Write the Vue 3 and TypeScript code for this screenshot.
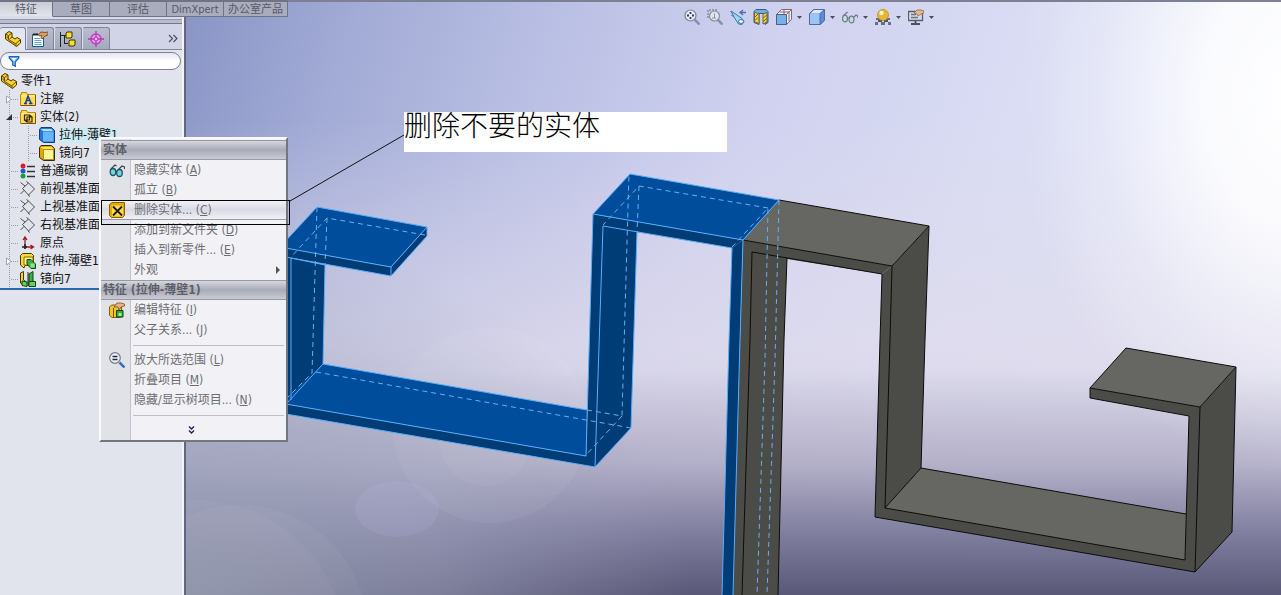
<script setup lang="ts">
import { ref } from 'vue'

interface TreeItem {
  label: string
  icon: string
  level: number
  arrow?: 'open' | 'closed'
  selected?: boolean
}

interface MenuItem {
  label: string
  key: string
  icon?: string
  hot?: boolean
  submenu?: boolean
}

interface Tool {
  icon: string
  title: string
  drop: boolean
}

const tabs = ['特征', '草图', '评估', 'DimXpert', '办公室产品']
const activeTab = ref('特征')
const filterText = ref('')

const panelTabs = [
  { icon: 'part', title: '设计树' },
  { icon: 'props', title: '属性' },
  { icon: 'config', title: '配置' },
  { icon: 'target', title: 'DimXpert 管理' },
]
const activePanel = ref('part')

const tree: TreeItem[] = [
  { label: '零件1', icon: 'part', level: 0 },
  { label: '注解', icon: 'note', level: 1, arrow: 'closed' },
  { label: '实体(2)', icon: 'bodies', level: 1, arrow: 'open' },
  { label: '拉伸-薄壁1', icon: 'cube-blue', level: 2, selected: true },
  { label: '镜向7', icon: 'cube-yellow', level: 2 },
  { label: '普通碳钢', icon: 'material', level: 1 },
  { label: '前视基准面', icon: 'plane', level: 1 },
  { label: '上视基准面', icon: 'plane', level: 1 },
  { label: '右视基准面', icon: 'plane', level: 1 },
  { label: '原点', icon: 'origin', level: 1 },
  { label: '拉伸-薄壁1', icon: 'extrude', level: 1, arrow: 'closed' },
  { label: '镜向7', icon: 'mirror', level: 1 },
]

const groups: { title?: string; items: MenuItem[] }[] = [
  {
    title: '实体',
    items: [
      { label: '隐藏实体', key: 'A', icon: 'glasses' },
      { label: '孤立', key: 'B' },
      { label: '删除实体...', key: 'C', icon: 'delete-body', hot: true },
      { label: '添加到新文件夹', key: 'D' },
      { label: '插入到新零件...', key: 'E' },
      { label: '外观', key: '', submenu: true },
    ],
  },
  {
    title: '特征 (拉伸-薄壁1)',
    items: [
      { label: '编辑特征', key: 'I', icon: 'edit-feature' },
      { label: '父子关系...', key: 'J' },
    ],
  },
  {
    items: [
      { label: '放大所选范围', key: 'L', icon: 'zoom-sel' },
      { label: '折叠项目', key: 'M' },
      { label: '隐藏/显示树项目...', key: 'N' },
    ],
  },
]

const tools: Tool[] = [
  { icon: 'zoom-fit', title: '整屏显示全图', drop: false },
  { icon: 'zoom-area', title: '局部放大', drop: false },
  { icon: 'prev-view', title: '上一视图', drop: false },
  { icon: 'section', title: '剖面视图', drop: false },
  { icon: 'orient', title: '视图定向', drop: true },
  { icon: 'shaded', title: '显示样式', drop: true },
  { icon: 'glasses-gray', title: '隐藏/显示项目', drop: true },
  { icon: 'scene', title: '应用布景', drop: true },
  { icon: 'view-set', title: '视图设定', drop: true },
]
</script>

<template>
  <div class="app">
    <svg class="defs" aria-hidden="true">
      <symbol id="part" viewBox="0 0 16 16">
        <path d="M.5 3l3.500-2.500 3 1.500v4l3 2 2-1.500 3.500 2v3.500l-4 3.500L.5 8z" fill="#f7d52c" stroke="#4a3500" stroke-linejoin="round" />
        <path d="M.5 3l3 1.500v4L11 13v2M3.500 4.500L7 2M11 12.500l4-3.500M7 6L4.500 8" fill="none" stroke="#6b4d00" />
        <path d="M1.500 4.500l1.500 1v2.500L1.500 7zM5 10l5 3.500v1L5 11z" fill="#a87b00" />
      </symbol>
      <symbol id="props" viewBox="0 0 16 16">
        <path d="M.5 3.500h11v12H.5z" fill="#fff" stroke="#1d5b8f" />
        <path d="M2.500 7.500h6M2.500 9.500h7M2.500 11.500h7M2.500 13.500h7" stroke="#58a5dc" />
        <path d="M1 3.500h5" stroke="#222" stroke-width="2" />
        <path d="M6 4l3-3 4 .5 3-.5v3l-3 1-3 3-1-2 1-2-2 1z" fill="#d9a066" stroke="#6d4012" stroke-width=".8" />
      </symbol>
      <symbol id="config" viewBox="0 0 16 16">
        <path d="M.5 1v15M1 4.500H6M4.500 5v8M5 12.500H8" stroke="#222" fill="none" />
        <path d="M6 2l1-1h5v5l-1 1H6zM9 10l1-1h5v5l-1 1H9z" fill="#f8df33" stroke="#3d3000" />
      </symbol>
      <symbol id="target" viewBox="0 0 16 16">
        <circle cx="8" cy="8" r="5" fill="#dba6e4" stroke="#c23fc8" stroke-width="1.500" />
        <path d="M8 0v16M0 8h16" stroke="#b636c0" stroke-width="1.300" />
        <circle cx="8" cy="8" r="2" fill="#e8c7f0" stroke="#b636c0" />
      </symbol>
      <symbol id="funnel" viewBox="0 0 16 16">
        <path d="M2.500 3h11v1.500L9.500 9v5l-3-1.500V9l-4-4.500z" fill="#7cc4f5" stroke="#1660b8" stroke-width="1.300" />
        <path d="M5 4.500h6L8 8z" fill="#fff" />
      </symbol>
      <symbol id="folder" viewBox="0 0 16 16">
        <path d="M.5 3.500h1v-2h5l1 2h8v11H.5z" fill="#ffdc55" stroke="#c08600" />
        <path d="M1.500 5h13" stroke="#fff3ad" />
        <path d="M15.500 4v10.500H1" fill="none" stroke="#7d5200" />
      </symbol>
      <symbol id="note" viewBox="0 0 16 16">
        <use href="#folder" />
        <path d="M4 12.500h3M9 12.500h3.500M5.500 12L8 5l3 7M6.500 9.500h3.500" fill="none" stroke="#143f9c" stroke-width="1.500" />
      </symbol>
      <symbol id="bodies" viewBox="0 0 16 16">
        <use href="#folder" />
        <path d="M4.500 6h5v5h-5zM7 8h5v5H7zM4.500 11L7 13M9.500 6L12 8" fill="none" stroke="#372400" stroke-width="1.200" />
      </symbol>
      <symbol id="cube-blue" viewBox="0 0 16 16">
        <path d="M.5 2.500L2 .5h10.500l3 3v12h-11l-4-3z" fill="#2277d8" stroke="#123f83" />
        <path d="M4 4.500h10.500v10H4z" fill="#66b5ff" />
        <path d="M1.500 2h11l1.500 2H4z" fill="#b5dbff" />
      </symbol>
      <symbol id="cube-yellow" viewBox="0 0 16 16">
        <path d="M.5 2.500L2 .5h10.500l3 3v12h-11l-4-3z" fill="#e0aa00" stroke="#3b2a00" />
        <path d="M4.500 4.500h10v10h-10z" fill="#fff59a" stroke="#8b6500" stroke-width=".6" />
        <path d="M1.500 2h11l1.500 2H4z" fill="#ffe55a" />
      </symbol>
      <symbol id="material" viewBox="0 0 16 16">
        <circle cx="3" cy="3" r="2.500" fill="#d91e2a" />
        <circle cx="3" cy="8" r="2.500" fill="#2258cf" />
        <circle cx="3" cy="13" r="2.500" fill="#1d9b42" />
        <path d="M7 3.500h8M7 8.500h8M7 13.500h8" stroke="#333" stroke-width="1.500" />
      </symbol>
      <symbol id="plane" viewBox="0 0 16 16">
        <path d="M2.500 7.500l6-5.500 6 6-6 6zM.5 1.500L5 5M.5 13L4 9.500M8.500 2L6.500 .5M8 14l2 1.500" fill="none" stroke="#4b4b4b" />
      </symbol>
      <symbol id="origin" viewBox="0 0 16 16">
        <path d="M5 14V2M3 5l2-3 2 3M4 12h9M10.500 10l3 2-3 2" fill="none" stroke="#a31621" stroke-width="1.300" />
        <path d="M2 12h5M5 9v5" stroke="#222" stroke-width="1.500" />
      </symbol>
      <symbol id="extrude" viewBox="0 0 16 16">
        <path d="M.5 2.500l2-2h9l2 2v10H5L4 15l-3.500-3z" fill="#f6da38" stroke="#4b3900" />
        <path d="M4 4h9v8H4z" fill="#fff18a" stroke="#8a6a00" />
        <path d="M7 6.500h4l4.500 4.500v4.500H11L7 11z" fill="#3caf45" stroke="#0d4b13" />
        <path d="M10.500 10.500h4v4h-4z" fill="#8be68b" />
      </symbol>
      <symbol id="mirror" viewBox="0 0 16 16">
        <path d="M.5 2l3-1.500V9l3 2v4l-6-3z" fill="#f2d232" stroke="#463600" />
        <path d="M9 3l4-2.500V10l2 1v4H9z" fill="#3eae44" stroke="#0b4712" />
        <path d="M2 10l5 1v4.500l-5-1zM9 10.500h6.500v5H9z" fill="#64d35e" stroke="#0b4712" />
        <path d="M8 1v14" stroke="#222" />
      </symbol>
      <symbol id="glasses" viewBox="0 0 16 16">
        <ellipse cx="4" cy="10" rx="2.800" ry="3.500" fill="#75d3e2" stroke="#1c5663" stroke-width="1.300" />
        <ellipse cx="10.500" cy="11" rx="2.800" ry="3.500" fill="#75d3e2" stroke="#1c5663" stroke-width="1.300" />
        <path d="M6.500 9.500l1.500 0M2 7l4-4 1.500 1M9.500 7.500L13 4l2.500 1v2" fill="none" stroke="#33474d" stroke-width="1.200" />
      </symbol>
      <symbol id="glasses-gray" viewBox="0 0 16 16">
        <ellipse cx="3" cy="9.500" rx="2.500" ry="3.300" fill="#c9dce6" stroke="#727a8a" stroke-width="1.200" />
        <ellipse cx="9.500" cy="10.500" rx="2.500" ry="3.300" fill="#c9dce6" stroke="#727a8a" stroke-width="1.200" />
        <path d="M5.500 9H7M1 7l4.500-4M11.500 8.500L14 6l1.500.5v2" fill="none" stroke="#727a8a" stroke-width="1.200" />
      </symbol>
      <symbol id="delete-body" viewBox="0 0 16 16">
        <path d="M.5 2.500L3 .5h12.500v13l-2 2H2.500l-2-2z" fill="#e3a900" stroke="#8b6200" />
        <path d="M3 3.500h11v11H3z" fill="#ffd94a" />
        <path d="M4 4.500l9 9M13 4.500l-9 9" stroke="#1b1b1b" stroke-width="1.800" />
      </symbol>
      <symbol id="edit-feature" viewBox="0 0 16 16">
        <path d="M.5 5l2-2h8l2 2v9l-1 1.500H3l-2.500-2z" fill="#f2c52e" stroke="#8a5c00" />
        <path d="M4.500 6v9" stroke="#7c5300" />
        <path d="M7.500 8.500h6.500v6.500H7.500z" fill="#34a93c" stroke="#0b4b12" />
        <path d="M9.500 11h3v3h-3z" fill="#a5ef98" />
        <path d="M5 5l3-4h4l3.500 1v2L12 5l-2 3-1-3z" fill="#e5b48a" stroke="#814a1a" stroke-width=".8" />
      </symbol>
      <symbol id="zoom-sel" viewBox="0 0 16 16">
        <circle cx="6" cy="6" r="5.300" fill="#eef2f8" stroke="#777c88" stroke-width="1.200" />
        <path d="M3.500 4.500h5M3.500 7.500h5" stroke="#222b44" stroke-width="1.600" />
        <path d="M10.500 10.500l5 5" stroke="#3d6eb5" stroke-width="2.500" />
      </symbol>
      <symbol id="zoom-fit" viewBox="0 0 16 16">
        <circle cx="6.500" cy="6.500" r="5.500" fill="#e6ebf7" stroke="#788090" stroke-width="1.200" />
        <path d="M6.500 3v2M6.500 8v2M3 6.500h2M8 6.500h2" stroke="#31394a" stroke-width="1.800" />
        <path d="M10.500 10.500l5 5" stroke="#8393b0" stroke-width="2.500" />
      </symbol>
      <symbol id="zoom-area" viewBox="0 0 16 16">
        <path d="M1 9V1h9" fill="none" stroke="#697082" stroke-dasharray="2 1" />
        <circle cx="7.500" cy="7" r="5" fill="#dfe5f3" stroke="#888f9e" stroke-width="1.200" />
        <path d="M7.500 4.500v4.500M9 9H5" stroke="#8a92a3" />
        <path d="M11 11l4.500 4.500" stroke="#8393b0" stroke-width="2.500" />
      </symbol>
      <symbol id="prev-view" viewBox="0 0 16 16">
        <path d="M.5 2.500L7 7M1 6l5 3" stroke="#4d86ad" />
        <path d="M1 2l3 2 8 5.500 2 3-2 3-3.500-.5L4 8z" fill="#a0d8f4" stroke="#3b79a7" />
        <path d="M16 3.500h-5M13 1l-3 2.500L13 6" fill="none" stroke="#4f6fac" stroke-width="1.300" />
        <ellipse cx="11" cy="12.500" rx="2.500" ry="2" fill="#eefaff" stroke="#3b79a7" />
      </symbol>
      <symbol id="section" viewBox="0 0 16 16">
        <path d="M1 2.500L3 .5h10l2 2v11l-3 2V4.500H6v11l-5-2z" fill="#72abea" stroke="#315c93" />
        <path d="M1.500 3.500L6 4.500v10L1.500 13zM10 5l4-1.500V13l-4 2z" fill="#f4d242" stroke="#6f6436" />
        <path d="M2 8l3-3M2 11.500l3-3M10.500 9l3-3M10.500 12.500l3-3" stroke="#7a6000" />
      </symbol>
      <symbol id="orient" viewBox="0 0 16 16">
        <path d="M.5 5.500l5-5h10v10l-5 5H.5z" fill="#eef1fa" stroke="#6a6f82" />
        <path d="M.5 5.500h10v10H.5z" fill="#78b1ea" stroke="#41628f" />
        <path d="M10.500 5.500l5-5M8 1v4M3.500 3h9.500v9" fill="none" stroke="#a45a66" />
      </symbol>
      <symbol id="shaded" viewBox="0 0 16 16">
        <path d="M.5 4.500l4-4h11v11l-4 4H.5z" fill="#5a8cd6" stroke="#4f6b9e" />
        <path d="M1 5h10v10H1z" fill="#9ac5f6" />
        <path d="M1.500 4.500L5 1h9.500l-3.500 3.500z" fill="#d8e9fb" />
        <path d="M11 4.500V15M11 4.500L15 1" stroke="#4f6b9e" />
      </symbol>
      <symbol id="scene" viewBox="0 0 16 16">
        <path d="M1 9h4v2H1zM11 9h4v2h-4zM0 13h3v3H0zM6 13h4v3H6zM13 13h3v3h-3z" fill="#6b6f7c" />
        <path d="M3 11h4v2H3zM9 11h4v2H9z" fill="#4e525f" />
        <circle cx="8" cy="6" r="5.500" fill="#e6b736" stroke="#a57c1c" stroke-width=".6" />
        <circle cx="6.500" cy="4" r="2.200" fill="#fff4bd" />
      </symbol>
      <symbol id="view-set" viewBox="0 0 16 16">
        <path d="M.5 2.500h14v9H.5z" fill="#d6dae5" stroke="#5a5f70" stroke-width="1.300" />
        <path d="M3 5.500h5M3 8.500h7" stroke="#6c7385" stroke-width="1.500" />
        <path d="M7.500 12v2M3 15h9" stroke="#4a4f60" stroke-width="1.800" />
        <path d="M6 4l3-3h4l3 1v2l-3 1-3 2-1-2z" fill="#e4b990" stroke="#855b39" stroke-width=".7" />
      </symbol>
    </svg>

    <nav class="tabs" aria-label="命令管理器">
      <button v-for="t in tabs" :key="t" :class="['tab', { active: t === activeTab }]" @click="activeTab = t">{{ t }}</button>
    </nav>

    <aside class="panel">
      <div class="panel-tabs">
        <button
          v-for="p in panelTabs"
          :key="p.icon"
          :class="['ptab', { active: p.icon === activePanel }]"
          :aria-label="p.title"
          @click="activePanel = p.icon"
        >
          <svg class="ico"><use :href="'#' + p.icon" /></svg>
        </button>
        <button class="expand" aria-label="展开">
          <svg width="10" height="9" viewBox="0 0 10 9"><path d="M1 1l3.500 3.500L1 8M5.500 1L9 4.500 5.500 8" fill="none" stroke="#4c5066" stroke-width="1.200" /></svg>
        </button>
      </div>
      <label class="filter">
        <svg class="funnel"><use href="#funnel" /></svg>
        <input v-model="filterText" type="text" aria-label="过滤" />
      </label>
      <ul class="tree">
        <li v-for="(n, i) in tree" :key="i" :class="['node', 'level-' + n.level]">
          <span v-if="n.level > 0" class="twig">
            <svg v-if="n.arrow === 'closed'" width="6" height="9" viewBox="0 0 6 9"><path d="M.5 1v7L5 4.500z" fill="#fff" stroke="#a0a3ac" /></svg>
            <svg v-else-if="n.arrow === 'open'" width="6" height="6" viewBox="0 0 6 6"><path d="M6 0v6H0z" fill="#333" /></svg>
          </span>
          <button :class="['leaf', { selected: n.selected }]">
            <svg class="ico"><use :href="'#' + n.icon" /></svg>
            <span class="name">{{ n.label }}</span>
          </button>
        </li>
      </ul>
    </aside>

    <main class="viewport">
      <svg class="model" viewBox="186 2 1095 593" preserveAspectRatio="xMinYMin slice" role="img" aria-label="模型">
        <g fill="#fff">
          <circle cx="490" cy="425" r="98" opacity=".05" />
          <circle cx="485" cy="440" r="46" opacity=".04" />
          <ellipse cx="397" cy="509" rx="42" ry="28" fill="#b9bbe6" opacity=".16" />
          <circle cx="240" cy="633" r="128" opacity=".04" />
          <circle cx="196" cy="650" r="150" opacity=".03" />
        </g>
        <g fill="#4b4b48">
          <path d="M743 240L892 266 882 274 787 259 784 340 778 595H732L740 340z" />
          <path d="M892 266L929 226 925 340 921 468 885 508 1185 560 1189 416 1090 398V388L1200 407 1236 367 1232 532 1195 572 875 517 880 340 882 274z" />
        </g>
        <g fill="#666663">
          <path d="M779 200L929 226 892 266 743 240z" />
          <path d="M921 468L1186 514 1185 560 885 508z" />
          <path d="M1126 348L1236 367 1200 407 1090 388z" />
        </g>
        <g fill="none" stroke="#0c0c0c" stroke-linejoin="round">
          <path d="M779 200L929 226 892 266 743 240M742 595L750 340 752 252 882 274 880 340 875 517 1195 572 1232 532 1236 367 1126 348 1090 388V398L1189 416 1185 560 885 508 890 340 892 266M787 258L784 340 778 595" />
          <path d="M929 226L925 340 921 468 1186 514M921 468L885 508M1090 388L1200 407 1236 367M1200 407L1195 572" />
        </g>
        <g fill="#003c76">
          <path d="M280 256L291 258 325 265 323 364 288 402 280 404z" />
          <path d="M280 247L391 267V276L280 256z" />
          <path d="M391 267L427 227V236L391 276z" />
          <path d="M593 214L743 240 732 248 637 232 631 428 595 467 280 413V403L586 456z" />
          <path d="M743 240L732 248 729 340 722 595H733L740 340z" />
        </g>
        <g fill="#004d9b">
          <path d="M317 207L427 227 391 267 280 247z" />
          <path d="M323 364L587 410 586 456 280 403z" />
          <path d="M593 214L630 174 779 200 743 240z" />
        </g>
        <g fill="none" stroke="#58aefa">
          <path d="M280 247L317 207 427 227V236L391 276 280 256M427 227L391 267 280 247M391 267V276" />
          <path d="M291 400V258L325 265 323 364 587 410M323 364L288 402M280 403L586 456 593 214 630 174 779 200 743 240 593 214M280 413L595 467 631 428 637 232M595 467L603 226 732 248 729 340 722 595M743 240L740 340 733 595" />
        </g>
        <g fill="none" stroke="#65b0f3" stroke-dasharray="5 4">
          <path d="M317 207L312 373 288 397M327 218L325 265M425 235L327 218 291 257M316 372L631 428M587 410L622 416 629 174M622 416L586 455" />
          <path d="M768 208L639 186 603 225M639 186L637 232M779 200L775 360 767 595M732 247L768 208 765 360 757 595" />
        </g>
        <path d="M290 201L404 135" stroke="#111" fill="none" />
      </svg>

      <div class="view-tools" role="toolbar" aria-label="前导视图">
        <button v-for="t in tools" :key="t.icon" :class="['tool', { drop: t.drop }]" :aria-label="t.title">
          <svg class="ico"><use :href="'#' + t.icon" /></svg>
          <svg v-if="t.drop" width="5" height="3" viewBox="0 0 5 3"><path d="M0 0h5L2.500 3z" fill="#4a4e60" /></svg>
        </button>
      </div>

      <p class="callout">删除不要的实体</p>
    </main>

    <div class="menu" role="menu">
      <template v-for="(g, gi) in groups" :key="gi">
        <h2 v-if="g.title" class="menu-title">{{ g.title }}</h2>
        <hr v-else class="sep" />
        <button v-for="m in g.items" :key="m.label" :class="['item', { hot: m.hot }]" role="menuitem">
          <span class="gutter"><svg v-if="m.icon" class="ico"><use :href="'#' + m.icon" /></svg></span>
          <span class="text">{{ m.label }}<template v-if="m.key"> (<u>{{ m.key }}</u>)</template></span>
          <svg v-if="m.submenu" class="sub" width="4" height="8" viewBox="0 0 4 8"><path d="M0 0v8l4-4z" fill="#555" /></svg>
        </button>
      </template>
      <hr class="sep" />
      <button class="item more" aria-label="更多">
        <svg width="7" height="8" viewBox="0 0 7 8"><path d="M1 .5l2.500 2.500L6 .5M1 4.500L3.500 7 6 4.500" fill="none" stroke="#1f1f52" stroke-width="1.400" /></svg>
      </button>
      <span class="marker"></span>
    </div>
  </div>
</template>

<style>
body {
  margin: 0;
}
</style>

<style scoped>
.app {
  position: relative;
  display: grid;
  grid-template-columns: 186px minmax(0, 1fr);
  grid-template-rows: 17px minmax(0, 1fr);
  height: 100vh;
  min-height: 460px;
  overflow: hidden;
  background: #e1e4ed;
  color: #111;
  font-family: "DejaVu Sans Condensed", "DejaVu Sans", "Noto Sans CJK SC", sans-serif;
  font-size: 12px;
}

.defs {
  position: absolute;
  width: 0;
  height: 0;
}

button {
  margin: 0;
  padding: 0;
  border: 0;
  background: none;
  color: inherit;
  font: inherit;
}

.ico {
  width: 16px;
  height: 16px;
  flex: none;
}

.tabs {
  grid-area: 1 / 1 / 2 / 3;
  z-index: 1;
  display: flex;
  justify-self: start;
  height: 17px;
}

.tab {
  box-sizing: border-box;
  min-width: 57px;
  padding: 0 4px;
  border: solid #6f7383;
  border-width: 2px 1px 1px 0;
  background: #a9acbd;
  color: #565966;
  font-size: 11px;
  line-height: 13px;
}

.tab.active {
  min-width: 53px;
  border-bottom-color: #d9dbe7;
  background: linear-gradient(#c9cbd6, #e2e4ec);
}

.panel {
  grid-area: 2 / 1 / 3 / 2;
  box-sizing: border-box;
  border-right: 2px solid #62677c;
  box-shadow: inset -2px 0 #f1f3f8;
  background: #e1e4ed;
}

.panel-tabs {
  display: flex;
  align-items: flex-end;
  height: 33px;
  box-sizing: border-box;
  margin-right: 2px;
  padding-top: 10px;
  border-bottom: 1px solid #80859a;
  background: linear-gradient(#d9dbea 2px, #9498ac 2px, #9498ac 3px, #b8bccf 3px, #b8bccf 6px, #74788c 6px, #74788c 7px, #d1d4e6 7px);
}

.ptab {
  display: grid;
  place-items: center;
  box-sizing: border-box;
  width: 28px;
  height: 22px;
  border: 1px solid #7e8398;
  border-bottom: 0;
  border-left-color: #dfe1ec;
  border-radius: 3px 3px 0 0;
  background: linear-gradient(#b9bdce, #a5a9bd);
}

.ptab.active {
  width: 26px;
  height: 23px;
  margin-bottom: -1px;
  border-left: 0;
  background: #e3e6f0;
}

.expand {
  display: grid;
  place-items: center;
  width: 18px;
  height: 22px;
  margin-left: auto;
}

.filter {
  display: flex;
  align-items: center;
  box-sizing: border-box;
  height: 18px;
  margin: 2px 3px 2px 0;
  padding: 0 6px;
  border: 1px solid #7d8193;
  border-radius: 9px;
  background: linear-gradient(#e4e6ef, #fff 50%);
}

.funnel {
  flex: none;
  width: 14px;
  height: 14px;
}

.filter input {
  flex: 1;
  min-width: 0;
  height: 14px;
  padding: 0 4px;
  border: 0;
  outline: 0;
  background: none;
  font: inherit;
}

.tree {
  margin: 0;
  padding: 0;
  list-style: none;
  border-bottom: 2px solid #2b66ae;
  margin-right: 2px;
}

.node {
  display: flex;
  align-items: center;
  height: 18px;
  white-space: nowrap;
}

.level-1,
.level-2 {
  background: repeating-linear-gradient(#9a9da8 0 1px, transparent 1px 2px) 9px 0 / 1px 18px no-repeat;
}

.level-2 {
  background:
    repeating-linear-gradient(#9a9da8 0 1px, transparent 1px 2px) 9px 0 / 1px 18px no-repeat,
    repeating-linear-gradient(#9a9da8 0 1px, transparent 1px 2px) 28px 0 / 1px 18px no-repeat;
}

.twig {
  display: flex;
  align-items: center;
  box-sizing: border-box;
  width: 20px;
  height: 18px;
  padding-left: 6px;
  background: repeating-linear-gradient(90deg, #9a9da8 0 1px, transparent 1px 2px) 11px 9px / 8px 1px no-repeat;
}

.level-2 .twig {
  width: 39px;
  background-position: 30px 9px;
}

.leaf {
  display: flex;
  align-items: center;
  gap: 4px;
  height: 18px;
}

.name {
  height: 16px;
  line-height: 16px;
}

.level-0 .leaf {
  margin-left: 1px;
}

.selected .name {
  background: #cdeaf5;
}

.viewport {
  position: relative;
  grid-area: 1 / 2 / 3 / 3;
  border-top: 2px solid #7d8093;
  background:
    radial-gradient(ellipse 26% 64% at 102% 16%, #fff 0%, rgba(255, 255, 255, 0.85) 35%, rgba(255, 255, 255, 0.3) 70%, transparent 100%),
    radial-gradient(ellipse 46% 62% at 0% 100%, rgba(156, 162, 182, 0.75) 0%, rgba(160, 166, 190, 0.5) 50%, transparent 100%),
    linear-gradient(to bottom, transparent 62%, rgba(150, 146, 176, 0.55) 78%, rgba(112, 110, 145, 0.85) 90%, rgba(84, 82, 114, 0.95) 100%),
    linear-gradient(to bottom, transparent 20%, rgba(224, 219, 234, 0.65) 58%, rgba(200, 194, 208, 0.6) 100%),
    linear-gradient(108deg, #8995c6 0%, #a3acd6 14%, #b8beE3 28%, #cfd1ef 46%, #d9dcf3 66%, #e0e5f9 100%);
}

.model {
  display: block;
  width: 100%;
  height: 100%;
}

.view-tools {
  position: absolute;
  top: 7px;
  left: 498px;
  display: flex;
  gap: 7px;
}

.tool {
  display: flex;
  align-items: center;
  justify-content: space-between;
  width: 16px;
  height: 16px;
}

.tool.drop {
  width: 26px;
}

.callout {
  position: absolute;
  top: 110px;
  left: 218px;
  box-sizing: border-box;
  width: 323px;
  height: 40px;
  margin: 0;
  background: #fff;
  color: #000;
  font-family: "Noto Sans CJK SC", sans-serif;
  font-size: 28px;
  font-weight: 300;
  line-height: 24px;
}

.menu {
  position: absolute;
  z-index: 2;
  top: 137px;
  left: 99px;
  box-sizing: border-box;
  width: 189px;
  padding: 1px 0;
  border: solid;
  border-width: 2px;
  border-color: #fafafc #74767e #74767e #fafafc;
  background: linear-gradient(90deg, #e1e2e7 29px, #c3c4cc 29px, #c3c4cc 30px, #f2f2f6 30px);
  color: #6c6d73;
}

.menu-title {
  box-sizing: border-box;
  height: 20px;
  margin: 0;
  padding: 0 2px;
  border: solid #9799a3;
  border-width: 1px 0;
  background: linear-gradient(#d5d6de, #a9abb8 50%, #c9cad3);
  color: #5e6068;
  font-size: 12px;
  font-weight: 700;
  line-height: 18px;
  white-space: nowrap;
}

.item {
  display: flex;
  align-items: center;
  box-sizing: border-box;
  width: 100%;
  height: 20px;
  text-align: left;
  white-space: nowrap;
}

.item.hot {
  border-bottom: 1px solid #9a9ca8;
  background: linear-gradient(#f4f4f8, #d9dae4 50%, #f0f0f5);
}

.gutter {
  display: grid;
  place-items: center;
  width: 31px;
}

.text {
  flex: 1;
  padding-left: 2px;
  line-height: 18px;
}

.sub {
  margin-right: 6px;
}

.sep {
  height: 1px;
  margin: 5px 2px 4px 32px;
  border: 0;
  background: #bcbdc5;
}

.more {
  justify-content: center;
  margin-bottom: -1px;
  padding-right: 4px;
}

.marker {
  position: absolute;
  top: 61px;
  left: 0;
  right: -4px;
  box-sizing: border-box;
  height: 25px;
  border: 1px solid #000;
  pointer-events: none;
}
</style>
